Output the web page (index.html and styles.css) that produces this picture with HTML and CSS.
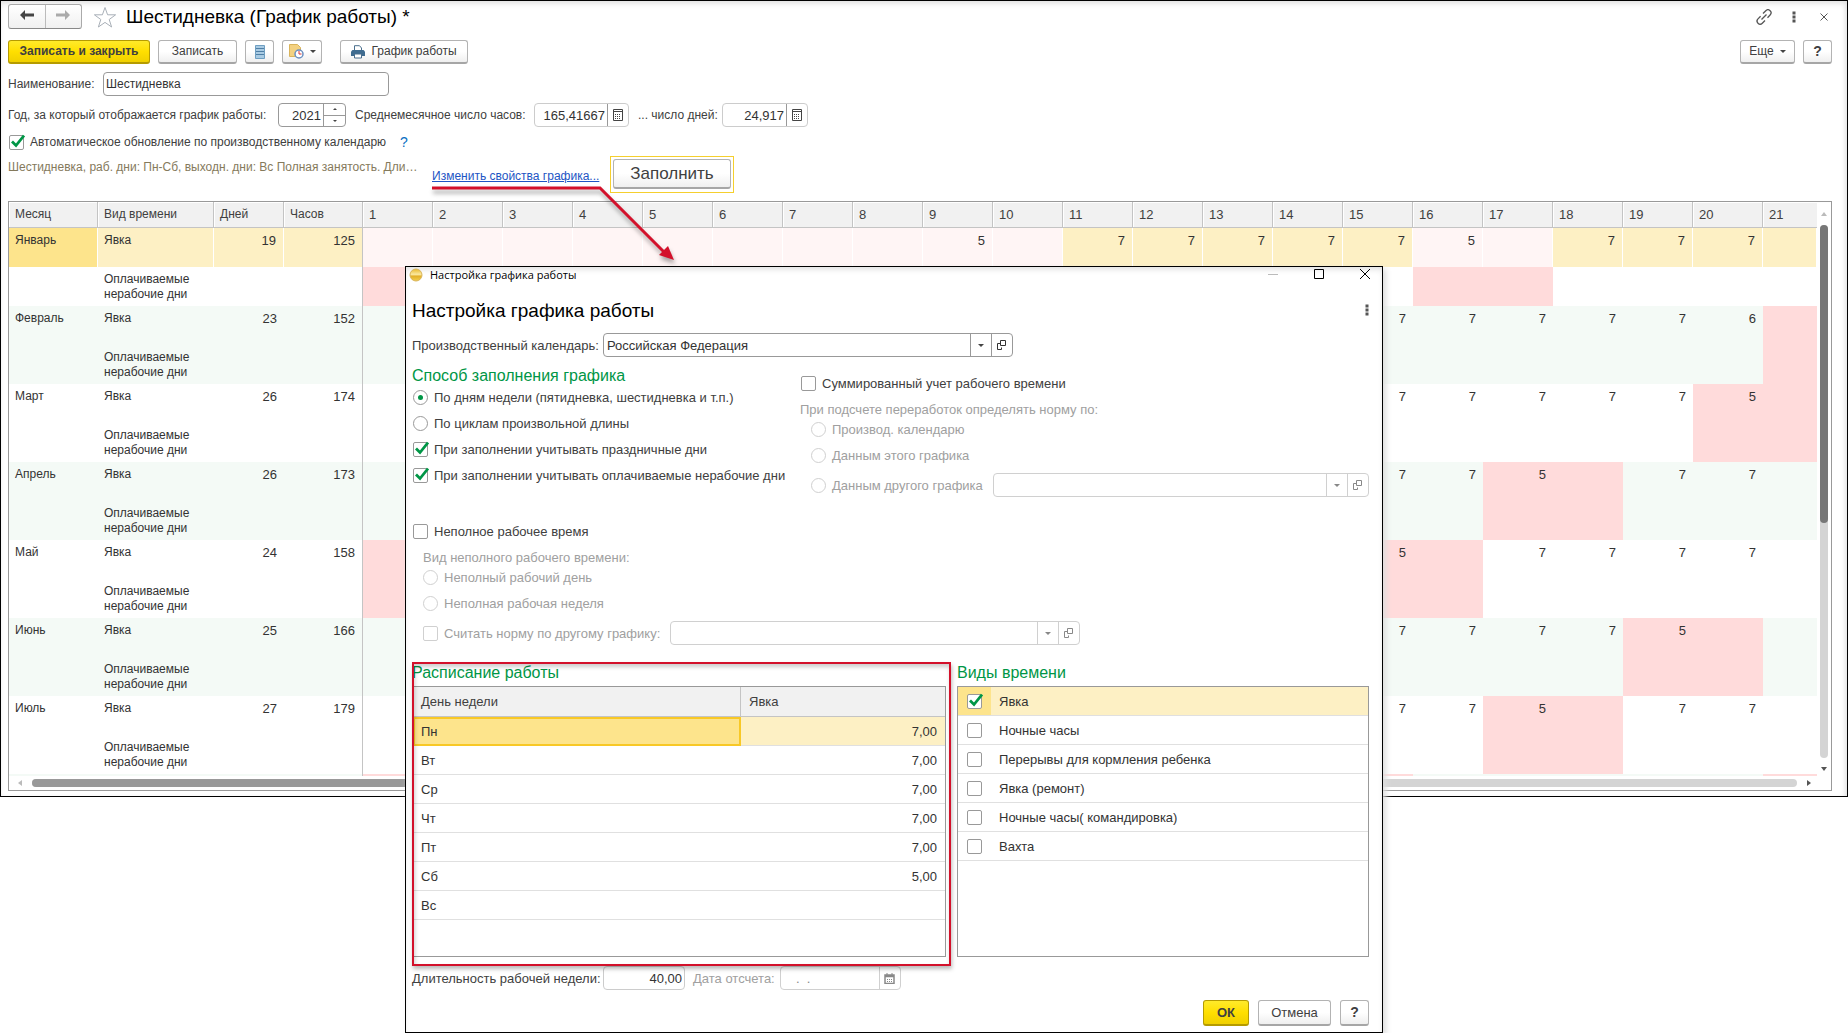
FILE: index.html
```html
<!DOCTYPE html>
<html lang="ru">
<head>
<meta charset="utf-8">
<title>Шестидневка (График работы)</title>
<link rel="stylesheet" href="styles.css">
</head>
<body>
<svg class="defs" aria-hidden="true">
  <symbol id="i-open" viewBox="0 0 10 10"><path d="M3.5.5h5v5h-5zM3.5 3.5h-3v6h4v-2" fill="none" stroke="currentColor"/></symbol>
  <symbol id="i-calc" viewBox="0 0 11 12"><path d="M.5.500h9v11h-9zM.5 2.500h9" fill="none" stroke="#444"/><path d="M2 5.500h6M2 7.500h6M2 9.500h6" stroke="#444" stroke-dasharray="1 1"/></symbol>
  <symbol id="i-date" viewBox="0 0 11 11"><path d="M1 2h9v8.500H1zM1 3.500h9" fill="none" stroke="currentColor" stroke-width="1.500"/><path d="M3 0v2M8 0v2" stroke="currentColor"/><path d="M3 6.500h5M3 8.500h5" stroke="currentColor" stroke-dasharray="1 1"/></symbol>
  <symbol id="i-dots" viewBox="0 0 4 12"><path d="M.5.500h3v3h-3zM.5 4.500h3v3h-3zM.5 8.500h3v3h-3z" fill="currentColor"/></symbol>
</svg>

<main class="window">
  <header class="titlebar">
    <div class="nav">
      <button type="button" aria-label="Назад"><svg width="14" height="10" viewBox="0 0 14 10"><path d="M0 5l5-5v3.500h9v3H5V10z" fill="#444"/></svg></button>
      <button type="button" aria-label="Вперед"><svg width="14" height="10" viewBox="0 0 14 10"><path d="M14 5L9 0v3.500H0v3h9V10z" fill="#aaa"/></svg></button>
    </div>
    <svg class="star" width="24" height="22" viewBox="0 0 24 22"><path d="M12 1.500l2.600 7.300h8l-6.400 4.700 2.400 7.500L12 16.400 5.400 21l2.400-7.500L1.400 8.800h8z" fill="#fff" stroke="#a9b0b8"/></svg>
    <h1>Шестидневка (График работы) *</h1>
    <div class="win-tools">
      <button type="button" aria-label="Ссылка"><svg width="16" height="16" viewBox="0 0 16 16"><path d="M7 4.500l2.800-2.800a2.900 2.900 0 0 1 4.300 4.300L11.500 8.700M9 11.500l-2.700 2.700A2.900 2.900 0 0 1 2 9.900L4.600 7.300M5.500 10.500l5-5" fill="none" stroke="#555" stroke-width="1.300"/></svg></button>
      <button type="button" aria-label="Меню"><svg width="4" height="12"><use href="#i-dots"/></svg></button>
      <button type="button" aria-label="Закрыть"><svg width="8" height="8" viewBox="0 0 8 8"><path d="M.5.500l7 7M7.500.500l-7 7" stroke="#555"/></svg></button>
    </div>
  </header>

  <div class="toolbar">
    <button type="button" class="btn primary wide">Записать и закрыть</button>
    <button type="button" class="btn save">Записать</button>
    <button type="button" class="btn icon" aria-label="Список"><svg width="10" height="14" viewBox="0 0 10 14"><path d="M.5.500h9v13h-9z" fill="#a9cbe3" stroke="#6f9fc2"/><path d="M1 3.500h8M1 6.500h8M1 9.500h8" stroke="#4f7fa6"/></svg></button>
    <button type="button" class="btn clock" aria-label="Отчеты"><svg width="15" height="15" viewBox="0 0 15 15"><path d="M.5.500h8l3 3v9H.5z" fill="#f3d181" stroke="#d9b45c"/><circle cx="10" cy="10" r="4" fill="#fff" stroke="#6a8fc0" stroke-width="1.500"/><path d="M10 7v3h2.500" stroke="#d33" fill="none"/></svg><i class="caret"></i></button>
    <button type="button" class="btn print"><svg width="14" height="14" viewBox="0 0 14 14"><path d="M3.500 6V.700h5L10.500 3v3" fill="#fff" stroke="#4a6f8d"/><path d="M1.500 5h11L14 6.500V11H0V6.500z" fill="#3f6c90"/><path d="M3.500 9h7v4h-7z" fill="#fff" stroke="#4a6f8d"/></svg>График работы</button>
    <span class="spacer"></span>
    <button type="button" class="btn more">Еще<i class="caret"></i></button>
    <button type="button" class="btn icon help">?</button>
  </div>

  <div class="line name-line">
    <label for="name">Наименование:</label>
    <input id="name" class="box name" type="text" value="Шестидневка">
  </div>

  <div class="line year-line">
    <label class="l-year" for="year">Год, за который отображается график работы:</label>
    <span class="field year"><input id="year" type="text" value="2021"><span class="spin"><button type="button" aria-label="Больше"><i class="caret up"></i></button><button type="button" aria-label="Меньше"><i class="caret"></i></button></span></span>
    <label class="l-hours" for="hours">Среднемесячное число часов:</label>
    <span class="field soft hours"><input id="hours" type="text" value="165,41667"><button type="button" aria-label="Калькулятор"><svg width="11" height="12"><use href="#i-calc"/></svg></button></span>
    <label class="l-days" for="days">... число дней:</label>
    <span class="field soft days"><input id="days" type="text" value="24,917"><button type="button" aria-label="Калькулятор"><svg width="11" height="12"><use href="#i-calc"/></svg></button></span>
  </div>

  <div class="line auto-line">
    <input id="auto" type="checkbox" checked>
    <label for="auto">Автоматическое обновление по производственному календарю</label>
    <a class="hint" href="#help">?</a>
  </div>

  <div class="fill-line">
    <p class="summary">Шестидневка, раб. дни: Пн-Сб, выходн. дни: Вс Полная занятость. Дли…</p>
    <a class="change" href="#settings">Изменить свойства графика...</a>
    <span class="ring"><button type="button" class="btn fill">Заполнить</button></span>
  </div>

  <section class="sheet">
    <div class="sheet-view">
      <table class="plan">
        <colgroup><col class="c-month"><col class="c-kind"><col class="c-days"><col class="c-hours"><col class="c-day" span="20"><col></colgroup>
        <thead><tr><th>Месяц</th><th>Вид времени</th><th>Дней</th><th>Часов</th><th>1</th><th>2</th><th>3</th><th>4</th><th>5</th><th>6</th><th>7</th><th>8</th><th>9</th><th>10</th><th>11</th><th>12</th><th>13</th><th>14</th><th>15</th><th>16</th><th>17</th><th>18</th><th>19</th><th>20</th><th>21</th></tr></thead>
        <tbody class="current">
          <tr><td class="picked">Январь</td><td>Явка</td><td>19</td><td>125</td><td class="pale"></td><td class="pale"></td><td class="pale"></td><td class="pale"></td><td class="pale"></td><td class="pale"></td><td class="pale"></td><td class="pale"></td><td class="pale">5</td><td class="pale"></td><td>7</td><td>7</td><td>7</td><td>7</td><td>7</td><td class="pale">5</td><td class="pale"></td><td>7</td><td>7</td><td>7</td><td></td></tr>
          <tr><td></td><td>Оплачиваемые нерабочие дни</td><td></td><td></td><td class="off" colspan="10"></td><td colspan="5"></td><td class="off" colspan="2"></td><td colspan="4"></td></tr>
        </tbody>
        <tbody>
          <tr><td>Февраль</td><td>Явка</td><td>23</td><td>152</td><td colspan="5"></td><td class="off" colspan="2"></td><td colspan="5"></td><td class="off" colspan="2"></td><td>7</td><td>7</td><td>7</td><td>7</td><td>7</td><td>6</td><td class="off"></td></tr>
          <tr><td></td><td>Оплачиваемые нерабочие дни</td><td></td><td></td><td colspan="5"></td><td class="off" colspan="2"></td><td colspan="5"></td><td class="off" colspan="2"></td><td colspan="6"></td><td class="off"></td></tr>
        </tbody>
        <tbody>
          <tr><td>Март</td><td>Явка</td><td>26</td><td>174</td><td colspan="5"></td><td class="off" colspan="3"></td><td colspan="4"></td><td class="off" colspan="2"></td><td>7</td><td>7</td><td>7</td><td>7</td><td>7</td><td class="off">5</td><td class="off"></td></tr>
          <tr><td></td><td>Оплачиваемые нерабочие дни</td><td></td><td></td><td colspan="5"></td><td class="off" colspan="3"></td><td colspan="4"></td><td class="off" colspan="2"></td><td colspan="5"></td><td class="off" colspan="2"></td></tr>
        </tbody>
        <tbody>
          <tr><td>Апрель</td><td>Явка</td><td>26</td><td>173</td><td colspan="2"></td><td class="off" colspan="2"></td><td colspan="5"></td><td class="off" colspan="2"></td><td colspan="3"></td><td>7</td><td>7</td><td class="off">5</td><td class="off"></td><td>7</td><td>7</td><td></td></tr>
          <tr><td></td><td>Оплачиваемые нерабочие дни</td><td></td><td></td><td colspan="2"></td><td class="off" colspan="2"></td><td colspan="5"></td><td class="off" colspan="2"></td><td colspan="5"></td><td class="off" colspan="2"></td><td colspan="3"></td></tr>
        </tbody>
        <tbody>
          <tr><td>Май</td><td>Явка</td><td>24</td><td>158</td><td class="off" colspan="3"></td><td colspan="4"></td><td class="off" colspan="3"></td><td colspan="4"></td><td class="off">5</td><td class="off"></td><td>7</td><td>7</td><td>7</td><td>7</td><td></td></tr>
          <tr><td></td><td>Оплачиваемые нерабочие дни</td><td></td><td></td><td class="off" colspan="3"></td><td colspan="4"></td><td class="off" colspan="3"></td><td colspan="4"></td><td class="off" colspan="2"></td><td colspan="5"></td></tr>
        </tbody>
        <tbody>
          <tr><td>Июнь</td><td>Явка</td><td>25</td><td>166</td><td colspan="4"></td><td class="off" colspan="2"></td><td colspan="5"></td><td class="off" colspan="3"></td><td>7</td><td>7</td><td>7</td><td>7</td><td class="off">5</td><td class="off"></td><td></td></tr>
          <tr><td></td><td>Оплачиваемые нерабочие дни</td><td></td><td></td><td colspan="4"></td><td class="off" colspan="2"></td><td colspan="5"></td><td class="off" colspan="3"></td><td colspan="4"></td><td class="off" colspan="2"></td><td></td></tr>
        </tbody>
        <tbody>
          <tr><td>Июль</td><td>Явка</td><td>27</td><td>179</td><td colspan="2"></td><td class="off" colspan="2"></td><td colspan="5"></td><td class="off" colspan="2"></td><td colspan="3"></td><td>7</td><td>7</td><td class="off">5</td><td class="off"></td><td>7</td><td>7</td><td></td></tr>
          <tr><td></td><td>Оплачиваемые нерабочие дни</td><td></td><td></td><td colspan="2"></td><td class="off" colspan="2"></td><td colspan="5"></td><td class="off" colspan="2"></td><td colspan="5"></td><td class="off" colspan="2"></td><td colspan="3"></td></tr>
        </tbody>
        <tbody>
          <tr><td></td><td></td><td></td><td></td><td class="off"></td><td colspan="5"></td><td class="off" colspan="2"></td><td colspan="5"></td><td class="off" colspan="2"></td><td colspan="5"></td><td class="off"></td></tr>
        </tbody>
      </table>
    </div>
    <div class="vbar"><i class="tri t-up"></i><div class="track"><div class="thumb"></div></div><i class="tri t-down"></i></div>
    <div class="hbar"><i class="tri t-left"></i><div class="track"><div class="thumb"></div></div><i class="tri t-right"></i></div>
  </section>
</main>

<svg class="arrow" width="260" height="90" viewBox="0 0 260 90" aria-hidden="true"><path d="M4 8H172L236 72" fill="none" stroke="#d3112b" stroke-width="3"/><path d="M246 80l-15-5 9-9z" fill="#d3112b"/></svg>

<section class="dialog" role="dialog" aria-label="Настройка графика работы">
  <header class="dlg-bar">
    <svg width="14" height="14" viewBox="0 0 14 14"><defs><linearGradient id="ball" x2="0" y2="1"><stop offset="0" stop-color="#e9b92c"/><stop offset=".45" stop-color="#fbe9a0"/><stop offset=".6" stop-color="#e3b02a"/><stop offset="1" stop-color="#f3d04f"/></linearGradient></defs><circle cx="7" cy="7" r="6" fill="url(#ball)" stroke="#d9b45c"/></svg>
    <span>Настройка графика работы</span>
    <div class="dlg-tools">
      <button type="button" aria-label="Свернуть"><svg width="10" height="10" viewBox="0 0 10 10"><path d="M0 5.500h10" stroke="#bbb"/></svg></button>
      <button type="button" aria-label="Развернуть"><svg width="10" height="10" viewBox="0 0 10 10"><path d="M.5.500h9v9h-9z" fill="none" stroke="#000"/></svg></button>
      <button type="button" aria-label="Закрыть"><svg width="10" height="10" viewBox="0 0 10 10"><path d="M0 0l10 10M10 0L0 10" stroke="#000"/></svg></button>
    </div>
  </header>

  <div class="dlg-body">
    <div class="dlg-head"><h2>Настройка графика работы</h2><button type="button" aria-label="Меню"><svg width="4" height="12"><use href="#i-dots"/></svg></button></div>

    <div class="line">
      <label class="lead" for="cal">Производственный календарь:</label>
      <span class="field combo"><select id="cal"><option>Российская Федерация</option></select><i class="drop"><i class="caret"></i></i><button type="button" aria-label="Открыть"><svg width="10" height="10"><use href="#i-open"/></svg></button></span>
    </div>

    <div class="options">
      <fieldset class="how">
        <legend>Способ заполнения графика</legend>
        <div class="opt"><input id="w1" type="radio" name="way" checked><label for="w1">По дням недели (пятидневка, шестидневка и т.п.)</label></div>
        <div class="opt"><input id="w2" type="radio" name="way"><label for="w2">По циклам произвольной длины</label></div>
        <div class="opt"><input id="w3" type="checkbox" checked><label for="w3">При заполнении учитывать праздничные дни</label></div>
        <div class="opt"><input id="w4" type="checkbox" checked><label for="w4">При заполнении учитывать оплачиваемые нерабочие дни</label></div>
      </fieldset>
      <div class="sum">
        <div class="opt"><input id="s0" type="checkbox"><label for="s0">Суммированный учет рабочего времени</label></div>
        <p class="muted">При подсчете переработок определять норму по:</p>
        <div class="opt in"><input id="s1" type="radio" name="norm" disabled><label for="s1">Производ. календарю</label></div>
        <div class="opt in"><input id="s2" type="radio" name="norm" disabled><label for="s2">Данным этого графика</label></div>
        <div class="opt in other"><input id="s3" type="radio" name="norm" disabled><label for="s3">Данным другого графика</label>
          <span class="field combo grow off-field"><select aria-label="Другой график" disabled><option></option></select><i class="drop"><i class="caret"></i></i><button type="button" aria-label="Открыть" disabled><svg width="10" height="10"><use href="#i-open"/></svg></button></span></div>
      </div>
    </div>

    <div class="part">
      <div class="opt"><input id="p0" type="checkbox"><label for="p0">Неполное рабочее время</label></div>
      <p class="muted in">Вид неполного рабочего времени:</p>
      <div class="opt in"><input id="p1" type="radio" name="part" disabled><label for="p1">Неполный рабочий день</label></div>
      <div class="opt in"><input id="p2" type="radio" name="part" disabled><label for="p2">Неполная рабочая неделя</label></div>
      <div class="opt in other"><input id="p3" type="checkbox" disabled><label for="p3">Считать норму по другому графику:</label>
        <span class="field combo off-field"><select aria-label="График для нормы" disabled><option></option></select><i class="drop"><i class="caret"></i></i><button type="button" aria-label="Открыть" disabled><svg width="10" height="10"><use href="#i-open"/></svg></button></span></div>
    </div>

    <div class="tables">
      <section class="week">
        <h3>Расписание работы</h3>
        <div class="frame">
          <table class="list">
            <thead><tr><th class="day">День недели</th><th>Явка</th></tr></thead>
            <tbody>
              <tr class="sel"><td class="edit">Пн</td><td>7,00</td></tr>
              <tr><td>Вт</td><td>7,00</td></tr>
              <tr><td>Ср</td><td>7,00</td></tr>
              <tr><td>Чт</td><td>7,00</td></tr>
              <tr><td>Пт</td><td>7,00</td></tr>
              <tr><td>Сб</td><td>5,00</td></tr>
              <tr><td>Вс</td><td></td></tr>
            </tbody>
          </table>
        </div>
        <div class="mark"></div>
      </section>
      <section class="kinds">
        <h3>Виды времени</h3>
        <div class="frame">
          <table class="list">
            <tbody>
              <tr class="sel"><td class="tick"><input id="k1" type="checkbox" checked></td><td><label for="k1">Явка</label></td></tr>
              <tr><td class="tick"><input id="k2" type="checkbox"></td><td><label for="k2">Ночные часы</label></td></tr>
              <tr><td class="tick"><input id="k3" type="checkbox"></td><td><label for="k3">Перерывы для кормления ребенка</label></td></tr>
              <tr><td class="tick"><input id="k4" type="checkbox"></td><td><label for="k4">Явка (ремонт)</label></td></tr>
              <tr><td class="tick"><input id="k5" type="checkbox"></td><td><label for="k5">Ночные часы( командировка)</label></td></tr>
              <tr><td class="tick"><input id="k6" type="checkbox"></td><td><label for="k6">Вахта</label></td></tr>
            </tbody>
          </table>
        </div>
      </section>
    </div>

    <div class="line foot">
      <label class="lead" for="len">Длительность рабочей недели:</label>
      <input id="len" class="box soft len" type="text" value="40,00">
      <label class="muted" for="from">Дата отсчета:</label>
      <span class="field off-field from"><input id="from" type="text" value="  .  ." disabled><button type="button" aria-label="Календарь" disabled><svg width="11" height="11"><use href="#i-date"/></svg></button></span>
    </div>

    <div class="actions">
      <button type="button" class="btn primary ok">ОК</button>
      <button type="button" class="btn cancel">Отмена</button>
      <button type="button" class="btn icon help">?</button>
    </div>
  </div>
</section>
</body>
</html>
```
FILE: styles.css
```css
* { box-sizing: border-box; }

body {
  margin: 0;
  background: #fff;
  color: #404040;
  font: 13px/15px "Liberation Sans", Arial, sans-serif;
}

button, input, select { font: inherit; color: inherit; margin: 0; }
button { padding: 0; border: 0; background: none; }
h1, h2, h3, p { margin: 0; font-weight: 400; }
label { white-space: nowrap; }
.defs { display: none; }

/* main window */
.window {
  border: 1px solid #000;
  padding: 3px 15px 5px 7px;
  font-size: 12px;
  box-shadow: inset 0 4px 6px -2px #ddd, inset -4px 0 6px -3px #ddd, 0 4px 6px #ddd;
}
.titlebar { display: flex; align-items: center; height: 25px; }
.nav {
  display: flex;
  width: 74px;
  height: 25px;
  border: 1px solid #aaa;
  border-bottom-color: #888;
  border-radius: 3px;
  background: linear-gradient(#fff, #f0f0f0);
}
.nav button { flex: 1; }
.nav button + button { border-left: 1px solid #bbb; }
.star { margin: 0 9px 0 11px; }
h1, h2 { color: #000; font-size: 19px; line-height: 24px; }
.win-tools { display: flex; align-items: center; gap: 14px; margin-left: auto; color: #555; }
.win-tools button { display: flex; justify-content: center; width: 16px; }

.toolbar { display: flex; gap: 8px; margin-top: 11px; height: 24px; }
.spacer { flex: 1; }
.btn {
  display: flex;
  align-items: center;
  justify-content: center;
  gap: 6px;
  height: 24px;
  border: 1px solid #b3b3b3;
  border-bottom: 2px solid #a6a6a6;
  border-radius: 3px;
  background: linear-gradient(#fff 50%, #efefef);
  white-space: nowrap;
}
.primary {
  border-color: #b59b00;
  background: linear-gradient(#ffea2b, #ffdf00 50%, #f0d000);
  font-weight: 700;
}
.wide { width: 142px; }
.save { width: 79px; }
.icon { width: 29px; }
.clock { width: 40px; }
.print { width: 128px; margin-left: 10px; }
.more { width: 55px; }
.help { font-weight: 700; font-size: 14px; }

.caret {
  display: block;
  border: 3px solid transparent;
  border-top-color: #444;
  border-bottom-width: 0;
}
.caret.up { border-width: 0 3px 3px; border-color: transparent transparent #444; }

.line { display: flex; align-items: center; }
.box, .field {
  height: 24px;
  border: 1px solid #999;
  border-radius: 4px;
  background: #fff;
  color: #333;
}
.field { display: flex; overflow: hidden; }
.field input, .field select {
  flex: 1;
  min-width: 0;
  border: 0;
  outline: 0;
  background: none;
  appearance: none;
  padding: 0 2px;
  text-align: right;
}
.field button, .drop {
  display: flex;
  align-items: center;
  justify-content: center;
  width: 21px;
  border-left: 1px solid #999;
}
.soft { border-color: #ccc; }

.name-line { margin-top: 8px; }
.name-line label { width: 95px; }
.name { width: 286px; padding: 0 2px; }
.year-line { margin-top: 7px; }
.year-line .field { margin-right: 9px; font-size: 13px; }
.l-year { width: 270px; }
.l-hours { width: 179px; }
.l-days { width: 84px; }
.year { width: 68px; }
.spin { display: flex; flex-direction: column; width: 22px; border-left: 1px solid #999; }
.field .spin button { flex: 1; width: 21px; border-left: 0; }
.field .spin button + button { border-top: 1px solid #999; }
.spin .caret { border-width: 2px 2px 0; }
.spin .caret.up { border-width: 0 2px 2px; }
.hours { width: 95px; }
.days { width: 86px; }

.auto-line { margin: 7px 0 0 1px; height: 16px; }
.auto-line label { margin-left: 6px; }
.hint { margin-left: 14px; color: #0a6fc2; font-size: 14px; text-decoration: none; }

.fill-line { display: flex; margin-top: 6px; height: 37px; }
.summary { width: 412px; padding-top: 4px; color: #857a5c; white-space: nowrap; }
.change { margin-left: 12px; width: 178px; padding-top: 13px; color: #1d55c4; white-space: nowrap; }
.ring { border: 1px solid #f5cf2e; padding: 2px; }
.fill { width: 118px; height: 30px; font-size: 17px; }

/* checkboxes and radios */
input[type=checkbox], input[type=radio] {
  appearance: none;
  flex: none;
  position: relative;
  width: 15px;
  height: 15px;
  border: 1px solid #999;
  border-radius: 2px;
  background: #fff;
}
input[type=radio] { border-radius: 50%; }
input:disabled[type=checkbox], input:disabled[type=radio] { border-color: #d0d0d0; }
input[type=checkbox]:checked::after {
  content: "";
  position: absolute;
  inset: -2px;
  background: url('data:image/svg+xml,<svg xmlns="http://www.w3.org/2000/svg" viewBox="0 0 17 17"><path d="M4 7.500l4 4L16 1.500" fill="none" stroke="%23009646" stroke-width="2.800"/></svg>') center / contain no-repeat;
}
input[type=radio]:checked::after {
  content: "";
  position: absolute;
  inset: 4px;
  border-radius: 50%;
  background: #009646;
}

/* schedule sheet */
.sheet {
  display: grid;
  grid-template-columns: minmax(0, 1fr) 14px;
  grid-template-rows: auto 14px;
  margin-top: 8px;
  border: 1px solid #999;
}
.sheet-view { height: 574px; overflow: hidden; }
table { width: 100%; border-collapse: separate; border-spacing: 0; table-layout: fixed; }
th { font-weight: 400; text-align: left; background: #f1f1f1; }
.c-month { width: 89px; }
.c-kind { width: 116px; }
.c-days, .c-day { width: 70px; }
.c-hours { width: 79px; }
.plan th {
  height: 26px;
  padding: 0 6px;
  border-right: 1px solid #c4c4c4;
  border-bottom: 1px solid #c4c4c4;
  box-shadow: inset 1px 1px #fff;
  overflow: hidden;
}
.plan th:last-child { border-right: 0; }
.plan td { height: 39px; padding: 5px 7px 4px 6px; text-align: right; vertical-align: top; color: #333; }
.plan td:nth-child(-n+2) { text-align: left; }
.plan td:nth-child(n+3), .plan th:nth-child(n+5) { font-size: 13px; }
.plan tbody:nth-of-type(even) td { background: #f4faf6; }
.plan td:nth-child(4) { border-right: 1px solid #c4c4c4; }
.plan tbody td.off:nth-child(n) { background: #ffdbdb; }
.plan .current tr:first-child td { background: #fdf0c4; }
.plan .current tr:first-child td:not(:nth-child(4)) { border-right: 1px solid #fff; }
.plan .current tr:first-child td.picked { background: #fde48c; }
.plan .current tr:first-child td.pale { background: #fff5f5; }

.vbar { display: flex; flex-direction: column; align-items: center; padding: 10px 0 5px; }
.hbar { display: flex; align-items: center; gap: 10px; grid-column: 1; padding: 0 6px 0 9px; }
.track { flex: 1; border-radius: 4px; background: #d4d4d4; }
.vbar .track { width: 8px; margin: 9px 0 9px; }
.hbar .track { height: 8px; }
.thumb { border-radius: 4px; background: #777; }
.vbar .thumb { width: 8px; height: 298px; }
.hbar .thumb { width: 60%; height: 8px; background: #999; }
.tri { border: 3px solid transparent; }
.t-up { border-top: 0; border-bottom: 4px solid #bbb; }
.t-down { border-bottom: 0; border-top: 4px solid #555; }
.t-left { border-left: 0; border-right: 4px solid #bbb; }
.t-right { border-right: 0; border-left: 4px solid #555; }

/* callout from the link to the settings window */
.arrow { position: absolute; left: 428px; top: 180px; filter: drop-shadow(1px 4px 2px #0005); }

/* settings window */
.dialog {
  position: absolute;
  left: 405px;
  top: 266px;
  width: 978px;
  border: 1px solid #000;
  background: #fff;
  box-shadow: inset 0 4px 6px -2px #ddd, 3px 3px 6px #ddd;
}
.dlg-bar {
  display: flex;
  align-items: center;
  gap: 7px;
  height: 16px;
  padding: 0 12px 0 3px;
  color: #000;
  font: 11px/16px "Open Sans", "Noto Sans", sans-serif;
}
.dlg-tools { display: flex; gap: 36px; margin-left: auto; }
.dlg-body { padding: 15px 13px 7px 6px; }
.dlg-head { display: flex; align-items: center; justify-content: space-between; height: 26px; margin-bottom: 9px; color: #555; }
.lead { width: 191px; }
.combo { width: 410px; }
.field select { text-align: left; padding-left: 3px; }
.options { display: grid; grid-template-columns: 388px minmax(0, 1fr); margin-top: 10px; }
fieldset { margin: 0; padding: 0; border: 0; min-width: 0; }
legend, h3 { display: block; padding: 0; color: #009646; font-size: 16px; line-height: 18px; }
.opt { display: flex; align-items: center; height: 24px; margin-bottom: 2px; padding-left: 1px; }
.opt label { margin-left: 6px; }
.sum { padding-top: 4px; }
.sum .muted { margin-top: 8px; line-height: 14px; }
.muted { color: #a0a0a0; }
.in { padding-left: 11px; }
.opt:has(:disabled) { color: #a0a0a0; }
.other { margin: 6px 0 0; }
.other .field { margin-left: 10px; }
.grow { flex: 1; min-width: 0; }
.off-field { border-color: #d0d0d0; color: #888; }
.off-field button, .off-field .drop { border-color: #d0d0d0; color: #888; }
.off-field .caret { border-top-color: #888; }
.part { margin-top: 22px; }
.part .muted { margin-top: 8px; line-height: 14px; }

.tables { display: grid; grid-template-columns: 534px minmax(0, 1fr); gap: 11px; margin-top: 19px; }
.week { position: relative; }
.frame { height: 271px; margin-top: 4px; border: 1px solid #999; }
.list th { height: 30px; padding: 0 8px; border-right: 1px solid #c4c4c4; border-bottom: 1px solid #c4c4c4; }
.list th:last-child { border-right: 0; }
.list .day { width: 328px; }
.list td { height: 29px; padding: 0 8px; border-bottom: 1px solid #e0e0e0; color: #333; }
.week td:last-child { text-align: right; }
.sel td { background: #fdf0c4; }
.sel td.edit { border: 2px solid #f8c826; background: #fde48c; padding-left: 6px; }
.list .tick { width: 33px; padding: 0 0 0 9px; }
.list .tick input { display: block; }
.sel td.tick { background: #fde48c; }
.mark {
  position: absolute;
  inset: -2px -5px -9px 0;
  border: 2px solid #d3112b;
  box-shadow: 1px 3px 4px #0004, inset 1px 3px 4px #0003;
}
.foot { margin-top: 9px; }
.len { width: 82px; margin-right: 8px; padding: 0 2px; text-align: right; }
.from { width: 121px; margin-left: 5px; }
.field.from input { text-align: left; padding-left: 8px; white-space: pre; }
.actions { display: flex; justify-content: flex-end; gap: 9px; margin-top: 10px; }
.actions .btn { height: 26px; }
.dlg-body { padding-bottom: 6px; }
.ok { width: 46px; }
.cancel { width: 73px; }
```
